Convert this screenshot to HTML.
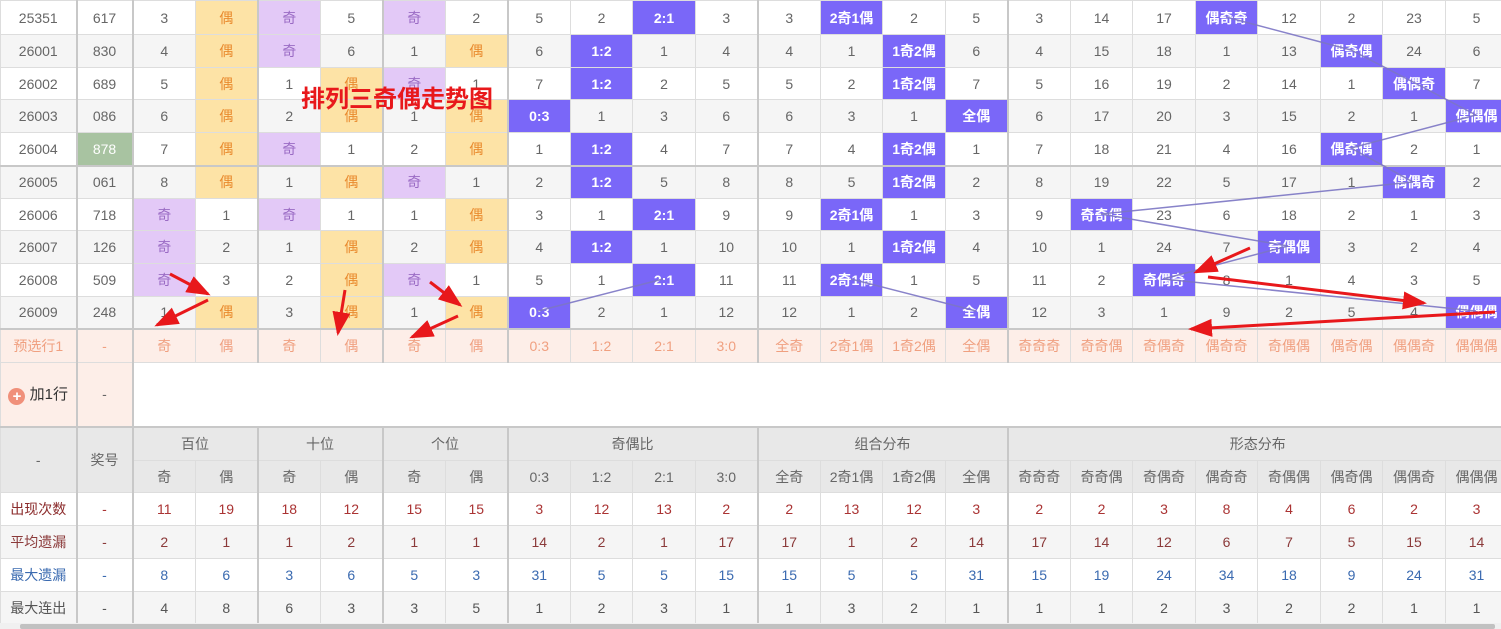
<!DOCTYPE html>
<html><head><meta charset="utf-8"><style>
body{margin:0;width:1501px;height:629px;overflow:hidden;background:#fff;font-family:"Liberation Sans","Noto Sans CJK SC",sans-serif;position:relative}
table{border-collapse:collapse;table-layout:fixed;position:absolute;left:0;top:0;width:1507px}
td{border:1px solid #ddd;text-align:center;font-size:14px;color:#666;padding:0;white-space:nowrap;overflow:hidden;box-sizing:border-box}
tr.e td{background:#f5f5f5}
td.L{border-left:2px solid #c8c8c8}
td.y{background:#fde3a6!important;color:#e98a2d}
td.p{background:#e3c9f7!important;color:#9a6bc4}
td.b{background:#7a67f8!important;color:#fff;font-weight:bold}
td.g{background:#a8c3a1!important;color:#fff}
tr.t td{border-top:2px solid #c8c8c8}
tr.s td{background:#fdeee8;color:#f0a080}
tr.hd td{background:#e8e8e8}
.r1 td{color:#a33}.r1 td:first-child{color:#8b2b2b}
.r2 td{color:#8b3a3a;background:#f5f5f5}
.r3 td{color:#3a6ab0}
.r4 td{color:#555;background:#f5f5f5}
svg{position:absolute;left:0;top:0}
</style></head><body>
<table>
<colgroup><col style="width:76px"><col style="width:56px"><col style="width:63px"><col style="width:62px"><col style="width:63px"><col style="width:62px"><col style="width:63px"><col style="width:62px"><col style="width:63px"><col style="width:62px"><col style="width:63px"><col style="width:62px"><col style="width:63px"><col style="width:62px"><col style="width:63px"><col style="width:62px"><col style="width:63px"><col style="width:62px"><col style="width:63px"><col style="width:62px"><col style="width:63px"><col style="width:62px"><col style="width:63px"><col style="width:62px"></colgroup>
<tr style="height:34px"><td>25351</td><td class="L">617</td><td class="L">3</td><td class="y">偶</td><td class="L p">奇</td><td>5</td><td class="L p">奇</td><td>2</td><td class="L">5</td><td>2</td><td class="b">2:1</td><td>3</td><td class="L">3</td><td class="b">2奇1偶</td><td>2</td><td>5</td><td class="L">3</td><td>14</td><td>17</td><td class="b">偶奇奇</td><td>12</td><td>2</td><td>23</td><td>5</td></tr>
<tr class="e" style="height:33px"><td>26001</td><td class="L">830</td><td class="L">4</td><td class="y">偶</td><td class="L p">奇</td><td>6</td><td class="L">1</td><td class="y">偶</td><td class="L">6</td><td class="b">1:2</td><td>1</td><td>4</td><td class="L">4</td><td>1</td><td class="b">1奇2偶</td><td>6</td><td class="L">4</td><td>15</td><td>18</td><td>1</td><td>13</td><td class="b">偶奇偶</td><td>24</td><td>6</td></tr>
<tr style="height:32px"><td>26002</td><td class="L">689</td><td class="L">5</td><td class="y">偶</td><td class="L">1</td><td class="y">偶</td><td class="L p">奇</td><td>1</td><td class="L">7</td><td class="b">1:2</td><td>2</td><td>5</td><td class="L">5</td><td>2</td><td class="b">1奇2偶</td><td>7</td><td class="L">5</td><td>16</td><td>19</td><td>2</td><td>14</td><td>1</td><td class="b">偶偶奇</td><td>7</td></tr>
<tr class="e" style="height:33px"><td>26003</td><td class="L">086</td><td class="L">6</td><td class="y">偶</td><td class="L">2</td><td class="y">偶</td><td class="L">1</td><td class="y">偶</td><td class="L b">0:3</td><td>1</td><td>3</td><td>6</td><td class="L">6</td><td>3</td><td>1</td><td class="b">全偶</td><td class="L">6</td><td>17</td><td>20</td><td>3</td><td>15</td><td>2</td><td>1</td><td class="b">偶偶偶</td></tr>
<tr style="height:33px"><td>26004</td><td class="L g">878</td><td class="L">7</td><td class="y">偶</td><td class="L p">奇</td><td>1</td><td class="L">2</td><td class="y">偶</td><td class="L">1</td><td class="b">1:2</td><td>4</td><td>7</td><td class="L">7</td><td>4</td><td class="b">1奇2偶</td><td>1</td><td class="L">7</td><td>18</td><td>21</td><td>4</td><td>16</td><td class="b">偶奇偶</td><td>2</td><td>1</td></tr>
<tr class="e t" style="height:33px"><td>26005</td><td class="L">061</td><td class="L">8</td><td class="y">偶</td><td class="L">1</td><td class="y">偶</td><td class="L p">奇</td><td>1</td><td class="L">2</td><td class="b">1:2</td><td>5</td><td>8</td><td class="L">8</td><td>5</td><td class="b">1奇2偶</td><td>2</td><td class="L">8</td><td>19</td><td>22</td><td>5</td><td>17</td><td>1</td><td class="b">偶偶奇</td><td>2</td></tr>
<tr style="height:32px"><td>26006</td><td class="L">718</td><td class="L p">奇</td><td>1</td><td class="L p">奇</td><td>1</td><td class="L">1</td><td class="y">偶</td><td class="L">3</td><td>1</td><td class="b">2:1</td><td>9</td><td class="L">9</td><td class="b">2奇1偶</td><td>1</td><td>3</td><td class="L">9</td><td class="b">奇奇偶</td><td>23</td><td>6</td><td>18</td><td>2</td><td>1</td><td>3</td></tr>
<tr class="e" style="height:33px"><td>26007</td><td class="L">126</td><td class="L p">奇</td><td>2</td><td class="L">1</td><td class="y">偶</td><td class="L">2</td><td class="y">偶</td><td class="L">4</td><td class="b">1:2</td><td>1</td><td>10</td><td class="L">10</td><td>1</td><td class="b">1奇2偶</td><td>4</td><td class="L">10</td><td>1</td><td>24</td><td>7</td><td class="b">奇偶偶</td><td>3</td><td>2</td><td>4</td></tr>
<tr style="height:33px"><td>26008</td><td class="L">509</td><td class="L p">奇</td><td>3</td><td class="L">2</td><td class="y">偶</td><td class="L p">奇</td><td>1</td><td class="L">5</td><td>1</td><td class="b">2:1</td><td>11</td><td class="L">11</td><td class="b">2奇1偶</td><td>1</td><td>5</td><td class="L">11</td><td>2</td><td class="b">奇偶奇</td><td>8</td><td>1</td><td>4</td><td>3</td><td>5</td></tr>
<tr class="e" style="height:32px"><td>26009</td><td class="L">248</td><td class="L">1</td><td class="y">偶</td><td class="L">3</td><td class="y">偶</td><td class="L">1</td><td class="y">偶</td><td class="L b">0:3</td><td>2</td><td>1</td><td>12</td><td class="L">12</td><td>1</td><td>2</td><td class="b">全偶</td><td class="L">12</td><td>3</td><td>1</td><td>9</td><td>2</td><td>5</td><td>4</td><td class="b">偶偶偶</td></tr>
<tr class="s t" style="height:34px"><td>预选行1</td><td class="L">-</td><td class="L">奇</td><td>偶</td><td class="L">奇</td><td>偶</td><td class="L">奇</td><td>偶</td><td class="L">0:3</td><td>1:2</td><td>2:1</td><td>3:0</td><td class="L">全奇</td><td>2奇1偶</td><td>1奇2偶</td><td>全偶</td><td class="L">奇奇奇</td><td>奇奇偶</td><td>奇偶奇</td><td>偶奇奇</td><td>奇偶偶</td><td>偶奇偶</td><td>偶偶奇</td><td>偶偶偶</td></tr>
<tr style="height:64px"><td style="background:#fdeee8;color:#333;font-size:15px"><span style="display:inline-block;width:17px;height:17px;border-radius:50%;background:#f0907a;color:#fff;font-size:15px;line-height:17px;font-weight:bold;vertical-align:-2px">+</span> 加1行</td><td class="L" style="background:#fdeee8">-</td><td class="L" colspan="22" style="border-right:none"></td></tr>
<tr class="hd t" style="height:34px"><td rowspan="2">-</td><td rowspan="2" class="L">奖号</td><td class="L" colspan="2">百位</td><td class="L" colspan="2">十位</td><td class="L" colspan="2">个位</td><td class="L" colspan="4">奇偶比</td><td class="L" colspan="4">组合分布</td><td class="L" colspan="8">形态分布</td></tr>
<tr class="hd" style="height:32px"><td class="L">奇</td><td>偶</td><td class="L">奇</td><td>偶</td><td class="L">奇</td><td>偶</td><td class="L">0:3</td><td>1:2</td><td>2:1</td><td>3:0</td><td class="L">全奇</td><td>2奇1偶</td><td>1奇2偶</td><td>全偶</td><td class="L">奇奇奇</td><td>奇奇偶</td><td>奇偶奇</td><td>偶奇奇</td><td>奇偶偶</td><td>偶奇偶</td><td>偶偶奇</td><td>偶偶偶</td></tr>
<tr class="r1" style="height:33px"><td>出现次数</td><td class="L">-</td><td class="L">11</td><td>19</td><td class="L">18</td><td>12</td><td class="L">15</td><td>15</td><td class="L">3</td><td>12</td><td>13</td><td>2</td><td class="L">2</td><td>13</td><td>12</td><td>3</td><td class="L">2</td><td>2</td><td>3</td><td>8</td><td>4</td><td>6</td><td>2</td><td>3</td></tr>
<tr class="r2" style="height:33px"><td>平均遗漏</td><td class="L">-</td><td class="L">2</td><td>1</td><td class="L">1</td><td>2</td><td class="L">1</td><td>1</td><td class="L">14</td><td>2</td><td>1</td><td>17</td><td class="L">17</td><td>1</td><td>2</td><td>14</td><td class="L">17</td><td>14</td><td>12</td><td>6</td><td>7</td><td>5</td><td>15</td><td>14</td></tr>
<tr class="r3" style="height:33px"><td>最大遗漏</td><td class="L">-</td><td class="L">8</td><td>6</td><td class="L">3</td><td>6</td><td class="L">5</td><td>3</td><td class="L">31</td><td>5</td><td>5</td><td>15</td><td class="L">15</td><td>5</td><td>5</td><td>31</td><td class="L">15</td><td>19</td><td>24</td><td>34</td><td>18</td><td>9</td><td>24</td><td>31</td></tr>
<tr class="r4" style="height:33px"><td>最大连出</td><td class="L">-</td><td class="L">4</td><td>8</td><td class="L">6</td><td>3</td><td class="L">3</td><td>5</td><td class="L">1</td><td>2</td><td>3</td><td>1</td><td class="L">1</td><td>3</td><td>2</td><td>1</td><td class="L">1</td><td>1</td><td>2</td><td>3</td><td>2</td><td>2</td><td>1</td><td>1</td></tr>
</table>
<svg width="1501" height="629">
<defs><marker id="a" markerWidth="8" markerHeight="6" refX="7" refY="3" orient="auto"><path d="M0,0L8,3L0,6z" fill="#e8181b"/></marker></defs>
<g stroke="#7c76c4" stroke-width="1.5" fill="none" opacity="0.9">
<polyline points="1101,214 1288,246 1163,279 1476,311"/>
<polyline points="1413,182 1101,214"/>
<polyline points="1226,17 1351,50 1413,82 1476,115 1351,148 1413,182"/>
<polyline points="663,279 538,311"/>
<polyline points="851,279 976,311"/>
</g>
<g stroke="#e8181b" stroke-width="3" fill="none" marker-end="url(#a)">
<line x1="170" y1="274" x2="208" y2="294"/>
<line x1="208" y1="300" x2="157" y2="325"/>
<line x1="345" y1="290" x2="338" y2="333"/>
<line x1="430" y1="282" x2="460" y2="305"/>
<line x1="458" y1="316" x2="412" y2="337"/>
<line x1="1250" y1="248" x2="1196" y2="272"/>
<line x1="1208" y1="277" x2="1424" y2="303"/>
<line x1="1495" y1="312" x2="1191" y2="329"/>
</g>
<text x="301" y="107" font-family="Liberation Sans,Noto Sans CJK SC,sans-serif" font-size="24" font-weight="bold" fill="#e8181b">排列三奇偶走势图</text>
<rect x="0" y="623" width="1501" height="6" fill="#f0f0f0"/>
<rect x="20" y="624" width="1475" height="5" rx="2" fill="#c1c1c1"/>
</svg>
</body></html>
